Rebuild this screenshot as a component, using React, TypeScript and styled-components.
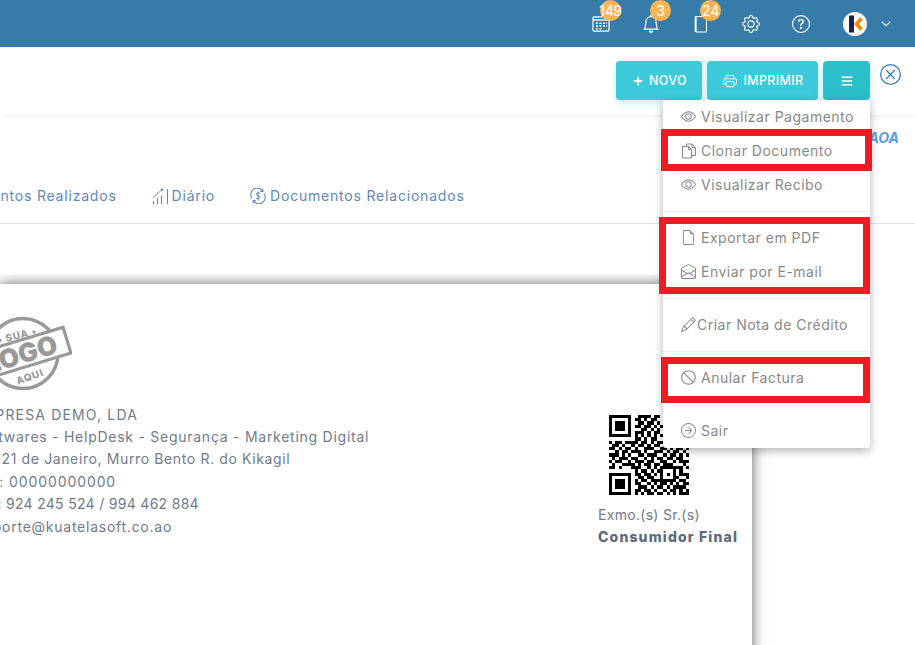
import React from "react";
import styled, { createGlobalStyle } from "styled-components";
import {
  BsEye, BsFileEarmark, BsEnvelopeOpen, BsPencil, BsArrowRightCircle,
  BsBell, BsGear, BsQuestionCircle, BsXCircle, BsPrinter, BsChevronDown,
} from "react-icons/bs";
import { FaPlus, FaBars } from "react-icons/fa";

const Global = createGlobalStyle`
  html, body { margin: 0; padding: 0; background: #fff; }
  body { font-family: Inter, "Open Sans", sans-serif; overflow: hidden; }
  * { box-sizing: border-box; }
`;

const Page = styled.div`
  position: relative;
  width: 915px;
  height: 645px;
  overflow: hidden;
  display: flex;
  flex-direction: column;
  background: #fff;
`;

const TopBar = styled.header`
  flex: none;
  height: 47px;
  background: #377ca8;
  display: flex;
  justify-content: flex-end;
  align-items: center;
  padding-right: 24px;
  color: #fff;
`;

const TopSlot = styled.div`
  position: relative;
  width: 50px;
  height: 47px;
  display: flex;
  align-items: center;
  justify-content: center;
  font-size: 18px;
  padding-top: 1px;
`;

const Badge = styled.span`
  position: absolute;
  top: 0;
  left: 24px;
  width: 21px;
  height: 21px;
  border-radius: 50%;
  background: #fcb552;
  color: #fff;
  font-size: 14px;
  letter-spacing: -0.3px;
  line-height: 21px;
  display: flex;
  justify-content: center;
  white-space: nowrap;
`;

const Avatar = styled.div`
  width: 24px;
  height: 24px;
  border-radius: 50%;
  background: #fff;
  display: flex;
  margin-right: 5px;
`;

const Caret = styled.span`
  font-size: 10px;
  display: flex;
  margin-left: 9px;
  svg { stroke: currentColor; stroke-width: 1px; }
`;

const AvatarGroup = styled.div`
  display: flex;
  align-items: center;
  padding-left: 17px;
  padding-top: 1px;
`;

const Toolbar = styled.div`
  flex: none;
  height: 68px;
  display: flex;
  justify-content: flex-end;
  align-items: flex-start;
  gap: 5px;
  padding: 14px 14px 0 0;
  box-shadow: 0 2px 5px rgba(0, 0, 0, 0.05);
`;

const ActionButton = styled.button<{ $w: number; $dark?: boolean }>`
  width: ${(p) => p.$w}px;
  height: 39px;
  border: 0;
  border-radius: 4px;
  background: ${(p) => (p.$dark ? "#2cc0cd" : "#3dcadb")};
  box-shadow: 0 3px 8px rgba(61, 202, 219, 0.3);
  color: #fff;
  font-family: Inter, sans-serif;
  font-size: 12.5px;
  font-weight: 500;
  letter-spacing: 0.35px;
  display: flex;
  align-items: center;
  justify-content: center;
  gap: 6px;
  padding: 0 0 0 ${(p) => (p.$dark ? 0 : 2)}px;
`;

const CloseIcon = styled.div`
  color: #3d7dbb;
  font-size: 21px;
  display: flex;
  margin: 3px 0 0 5px;
`;

const Summary = styled.div`
  flex: none;
  height: 60px;
  display: flex;
  justify-content: flex-end;
  padding: 14px 16px 0 0;
  color: #5b9be0;
  font-size: 14px;
  font-weight: 700;
  font-style: italic;
  line-height: 18px;
`;

const Tabs = styled.nav`
  flex: none;
  height: 49px;
  border-bottom: 1px solid #e2e2e2;
  display: flex;
  align-items: flex-start;
  gap: 35px;
  padding-top: 12px;
  color: #5f87bd;
  font-size: 14px;
  line-height: 18px;
  letter-spacing: 0.8px;
  white-space: nowrap;
`;

const TabFirst = styled.span`
  margin-left: -58px;
`;

const Tab = styled.span<{ $gap: number }>`
  display: flex;
  align-items: center;
  gap: ${(p) => p.$gap}px;
  svg { flex: none; }
`;

const Gap = styled.div`
  flex: none;
  height: 50px;
`;

const PaperArea = styled.div`
  flex: 1;
  min-height: 0;
  padding-top: 10px;
  overflow: hidden;
`;

const Paper = styled.div`
  width: 752px;
  height: 400px;
  background: #fff;
  box-shadow: 0 0 13px rgba(0, 0, 0, 0.62);
  display: flex;
  justify-content: space-between;
  color: #6f7b8c;
  font-size: 14px;
  line-height: 22.4px;
  overflow: hidden;
`;

const CompanyCol = styled.div`
  margin-left: -26px;
  padding-top: 32px;
  white-space: nowrap;
`;

const CompanyLine = styled.div<{ $track: number; $shift?: number }>`
  letter-spacing: ${(p) => p.$track}px;
  margin-left: ${(p) => p.$shift ?? 0}px;
`;

const LogoMark = styled.svg`
  display: block;
  width: 98px;
  height: 76px;
  margin-bottom: 11.5px;
`;

const CustomerCol = styled.div`
  width: 154px;
  flex: none;
  padding-top: 131px;
  white-space: nowrap;
`;

const Qr = styled.svg`
  display: block;
  width: 80px;
  height: 80px;
  margin: 0 0 9px 11px;
`;

const CustomerTitle = styled.div`
  letter-spacing: 0.3px;
`;

const CustomerName = styled.div`
  font-weight: 800;
  color: #5c6a7d;
  letter-spacing: 1.15px;
`;

const Menu = styled.div`
  position: absolute;
  top: 100px;
  left: 663px;
  width: 207px;
  background: #fff;
  box-shadow: 0 3px 10px rgba(0, 0, 0, 0.3);
  border-radius: 0 0 3px 3px;
  display: flex;
  flex-direction: column;
  color: #888888;
  font-size: 14px;
  letter-spacing: 0.5px;
`;

const MenuItem = styled.div<{ $gap?: number }>`
  height: 34px;
  padding: 0 0 1px 18px;
  display: flex;
  align-items: center;
  gap: ${(p) => p.$gap ?? 5}px;
  white-space: nowrap;
  svg { flex: none; }
`;

const MenuDivider = styled.div<{ $blank?: boolean }>`
  height: 1px;
  margin: 9px 0;
  background: ${(p) => (p.$blank ? "transparent" : "#eeeeee")};
`;

const Highlight = styled.div<{ $x: number; $y: number; $w: number; $h: number }>`
  position: absolute;
  left: ${(p) => p.$x}px;
  top: ${(p) => p.$y}px;
  width: ${(p) => p.$w}px;
  height: ${(p) => p.$h}px;
  border: 7px solid #ed1c24;
  pointer-events: none;
`;

const QR_ROWS = [
  "1111111001111011011111111",
  "1000001011010110010000001",
  "1011101001101101010111101",
  "1011101011011010110111101",
  "1011101000110101010111101",
  "1000001011101011010000001",
  "1111111010101010101111111",
  "0000000011010110000000000",
  "1011011110110101101101011",
  "0110100101101011011010110",
  "1101011010011100110101101",
  "0010110111010011101011010",
  "1110101001101110010110101",
  "0101110110010101101101100",
  "1011001011101100110010111",
  "0100111101011011011100010",
  "1101000111001010111111101",
  "0000000010110101100010100",
  "1111111011011010101010111",
  "1000001001101100100011001",
  "1011101010110111111110110",
  "1011101011001010110101011",
  "1011101001110101101011110",
  "1000001011011010010110101",
  "1111111010101101101010111",
];

const qrPath = QR_ROWS.map((row, y) =>
  row
    .split("")
    .map((c, x) => (c === "1" ? `M${x} ${y}h1v1h-1z` : ""))
    .join("")
).join("");

function CalendarIcon() {
  return (
    <svg width="18" height="16" viewBox="0 0 18 16" fill="none" stroke="currentColor">
      <rect x="1" y="0.8" width="16" height="14.4" rx="1" strokeWidth="1.2" />
      <path d="M1 4h16" strokeWidth="1.4" />
      <path d="M4 7.2h2M7.5 7.2h2M11 7.2h2M14 7.2h1M4 10h2M7.5 10h2M11 10h2M14 10h1M4 12.8h2M7.5 12.8h2" strokeWidth="1.6" />
    </svg>
  );
}

function SheetIcon() {
  return (
    <svg width="14" height="18" viewBox="0 0 14 18" fill="none" stroke="currentColor">
      <path d="M2 1.5h10.5v15.5H2z" strokeWidth="1" />
      <path d="M1.5 1.5v15.5" strokeWidth="1.6" />
    </svg>
  );
}

function DiaryIcon() {
  return (
    <svg width="17" height="18" viewBox="0 0 17 18" fill="none" stroke="currentColor">
      <path d="M1.5 17v-3M5.5 17v-6M9.5 17V8.5M15.5 17V2" strokeWidth="1.1" />
      <path d="M1 10.5 9.5 3" strokeWidth="0.9" />
      <circle cx="10" cy="2.6" r="1.2" fill="currentColor" stroke="none" />
    </svg>
  );
}

function ExchangeIcon() {
  return (
    <svg width="16" height="16" viewBox="0 0 16 16" fill="none" stroke="currentColor" strokeWidth="1.1">
      <path d="M2 10.5A6.5 6.5 0 0 1 12.5 2.8" />
      <path d="M14 5.5A6.5 6.5 0 0 1 3.5 13.2" />
      <path d="M12.8 0.8v2.6h-2.6M3.2 15.2v-2.6h2.6" />
      <path d="M10 5.9C9.6 4.8 6.4 4.6 6.3 6.2 6.2 8 9.9 7.6 9.8 9.6 9.7 11.2 6.4 11 6 9.9M8 3.6v8.8" strokeWidth="1" />
    </svg>
  );
}

function ClonePagesIcon() {
  return (
    <svg width="16" height="16" viewBox="0 0 16 16" fill="none" stroke="currentColor" strokeWidth="1">
      <path d="M5.5 3.5V1h5.5l3.5 3.5V12.5H10.5" />
      <path d="M11 1v3.5h3.5" />
      <path d="M1.5 3.5h6l3 3v8.5h-9z" />
      <path d="M7.5 3.5v3h3" />
    </svg>
  );
}

function BanIcon() {
  return (
    <svg width="15" height="15" viewBox="0 0 15 15" fill="none" stroke="currentColor" strokeWidth="1.1">
      <circle cx="7.5" cy="7.5" r="6.8" />
      <path d="M2.7 2.7 12.3 12.3" />
    </svg>
  );
}

function KLogo() {
  return (
    <svg width="24" height="24" viewBox="0 0 24 24" fill="none">
      <rect x="6" y="3.5" width="5" height="17" fill="#16204f" />
      <path d="M18.5 6.5 13.5 12l5 5.5" stroke="#f58a07" strokeWidth="3.6" />
    </svg>
  );
}

function Logo() {
  const gray = "#999";
  return (
    <LogoMark viewBox="0 0 98 76">
      <circle cx="49" cy="37.5" r="35" fill="none" stroke={gray} strokeWidth="3.4" />
      <text x="44" y="23" textAnchor="middle" transform="rotate(-14 44 23)" fontFamily="Inter, sans-serif" fontWeight="800" fontSize="10" fill={gray} letterSpacing="0.8">• SUA •</text>
      <text x="57" y="64" textAnchor="middle" transform="rotate(-20 57 64)" fontFamily="Inter, sans-serif" fontWeight="800" fontSize="10" fill={gray} letterSpacing="0.8">AQUI</text>
      <g transform="rotate(-17 49 37.5)">
        <rect x="3" y="24" width="92" height="27" fill="#fff" stroke={gray} strokeWidth="3.2" />
        <text x="47" y="47" textAnchor="middle" fontFamily="Inter, sans-serif" fontWeight="900" fontSize="26" fill={gray}>LOGO</text>
      </g>
    </LogoMark>
  );
}

export default function App() {
  return (
    <Page>
      <Global />
      <TopBar>
        <TopSlot><CalendarIcon /><Badge>149</Badge></TopSlot>
        <TopSlot><BsBell /><Badge>3</Badge></TopSlot>
        <TopSlot><SheetIcon /><Badge>24</Badge></TopSlot>
        <TopSlot><BsGear /></TopSlot>
        <TopSlot><BsQuestionCircle /></TopSlot>
        <AvatarGroup>
          <Avatar><KLogo /></Avatar>
          <Caret><BsChevronDown /></Caret>
        </AvatarGroup>
      </TopBar>

      <Toolbar>
        <ActionButton $w={86}><FaPlus size={10} /> NOVO</ActionButton>
        <ActionButton $w={111}><BsPrinter size={14} /> IMPRIMIR</ActionButton>
        <ActionButton $w={47} $dark><FaBars size={12} /></ActionButton>
        <CloseIcon><BsXCircle /></CloseIcon>
      </Toolbar>

      <Summary>AOA</Summary>

      <Tabs>
        <TabFirst>Pagamentos Realizados</TabFirst>
        <Tab $gap={3}><DiaryIcon />Diário</Tab>
        <Tab $gap={4}><ExchangeIcon />Documentos Relacionados</Tab>
      </Tabs>

      <Gap />

      <PaperArea>
        <Paper>
          <CompanyCol>
            <Logo />
            <CompanyLine $track={1.15} $shift={-2}>EMPRESA DEMO, LDA</CompanyLine>
            <CompanyLine $track={0.74}>Softwares - HelpDesk - Segurança - Marketing Digital</CompanyLine>
            <CompanyLine $track={0.62} $shift={-4}>Rua 21 de Janeiro, Murro Bento R. do Kikagil</CompanyLine>
            <CompanyLine $track={0.9}>NIF: 00000000000</CompanyLine>
            <CompanyLine $track={0.3} $shift={3}>Tel: 924 245 524 / 994 462 884</CompanyLine>
            <CompanyLine $track={0.75}>Suporte@kuatelasoft.co.ao</CompanyLine>
          </CompanyCol>
          <CustomerCol>
            <Qr viewBox="0 0 25 25" shapeRendering="crispEdges"><path d={qrPath} fill="#000" /></Qr>
            <CustomerTitle>Exmo.(s) Sr.(s)</CustomerTitle>
            <CustomerName>Consumidor Final</CustomerName>
          </CustomerCol>
        </Paper>
      </PaperArea>

      <Menu>
        <MenuItem><BsEye size={15} />Visualizar Pagamento</MenuItem>
        <MenuItem $gap={4}><ClonePagesIcon />Clonar Documento</MenuItem>
        <MenuItem><BsEye size={15} />Visualizar Recibo</MenuItem>
        <MenuDivider />
        <MenuItem><BsFileEarmark size={15} />Exportar em PDF</MenuItem>
        <MenuItem><BsEnvelopeOpen size={15} />Enviar por E-mail</MenuItem>
        <MenuDivider />
        <MenuItem $gap={1}><BsPencil size={15} />Criar Nota de Crédito</MenuItem>
        <MenuDivider />
        <MenuItem><BanIcon />Anular Factura</MenuItem>
        <MenuDivider $blank />
        <MenuItem><BsArrowRightCircle size={15} />Sair</MenuItem>
      </Menu>

      <Highlight $x={661} $y={129} $w={211} $h={42} />
      <Highlight $x={659} $y={217} $w={211} $h={77} />
      <Highlight $x={661} $y={357} $w={209} $h={46} />
    </Page>
  );
}
